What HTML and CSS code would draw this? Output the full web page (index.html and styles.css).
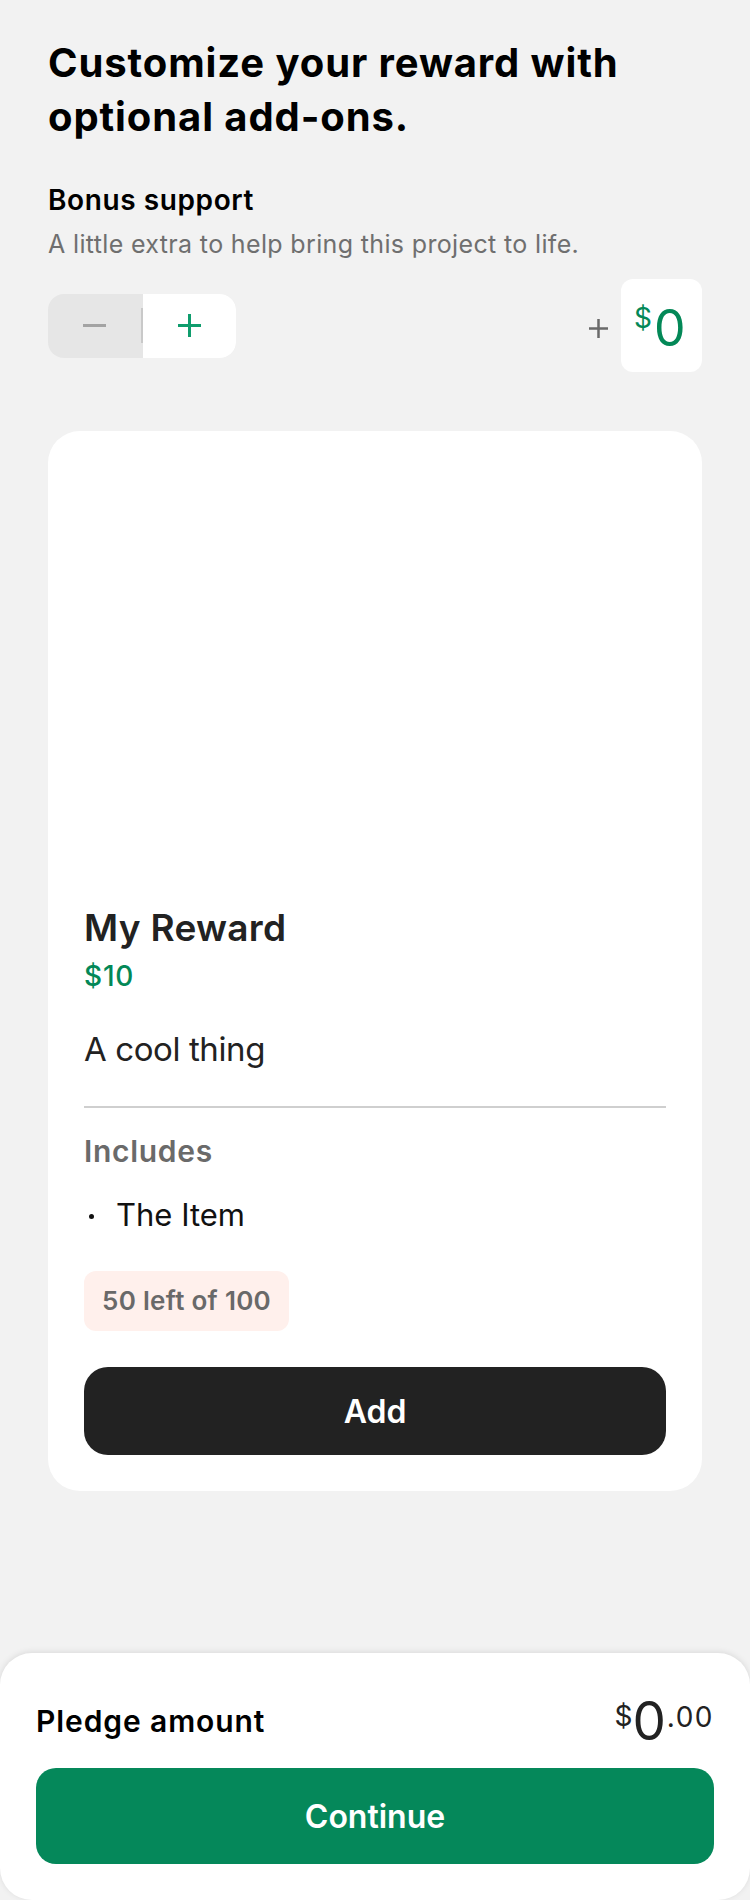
FILE: index.html
```html
<!DOCTYPE html>
<html lang="en">
<head>
<meta charset="utf-8">
<title>Add-ons</title>
<link rel="stylesheet" href="styles.css">
</head>
<body>
<main class="page">
  <h1 class="title">Customize your reward with optional add-ons.</h1>

  <section class="bonus">
    <h2 class="bonus-title">Bonus support</h2>
    <p class="bonus-sub">A little extra to help bring this project to life.</p>
    <div class="bonus-row">
      <div class="stepper">
        <button class="step step-minus" aria-label="Decrease">
          <svg width="23" height="3" viewBox="0 0 23 3"><rect x="0" y="0" width="23" height="3" fill="#a3a3a3"/></svg>
        </button>
        <span class="step-divider"></span>
        <button class="step step-plus" aria-label="Increase">
          <svg width="23" height="23" viewBox="0 0 23 23"><path d="M11.5 0v23M0 11.5h23" stroke="#0f9d6d" stroke-width="3"/></svg>
        </button>
      </div>
      <div class="bonus-amount">
        <svg class="plus-sign" width="19" height="19" viewBox="0 0 19 19"><path d="M9.5 0v19M0 9.5h19" stroke="#6a6a6a" stroke-width="2.5"/></svg>
        <div class="amount-box"><span class="amount-cur">$</span><span class="amount-num">0</span></div>
      </div>
    </div>
  </section>

  <article class="card">
    <div class="card-media"></div>
    <h3 class="reward-title">My Reward</h3>
    <p class="reward-price">$10</p>
    <p class="reward-desc">A cool thing</p>
    <hr class="divider">
    <p class="includes">Includes</p>
    <ul class="items">
      <li class="item"><span class="dot"></span>The Item</li>
    </ul>
    <span class="badge">50 left of 100</span>
    <button class="add-btn">Add</button>
  </article>
</main>

<footer class="pledge">
  <div class="pledge-row">
    <span class="pledge-label">Pledge amount</span>
    <span class="pledge-amount"><span class="pa-cur">$</span><span class="pa-num">0</span><span class="pa-dec">.00</span></span>
  </div>
  <button class="continue-btn">Continue</button>
</footer>
</body>
</html>
```

FILE: styles.css
```css
* { box-sizing: border-box; }

html, body {
  margin: 0;
  padding: 0;
}

body {
  background: #f2f2f2;
  font-family: Inter, "Noto Sans", sans-serif;
  color: #000;
  min-height: 100vh;
  display: flex;
  flex-direction: column;
}

button {
  font-family: inherit;
  border: none;
  padding: 0;
  margin: 0;
  cursor: pointer;
}

.page {
  padding: 36px 48px 0;
}

.title {
  margin: 0;
  font-size: 40px;
  line-height: 54px;
  font-weight: 700;
  letter-spacing: 0.9px;
  color: #000;
}

.bonus-title {
  margin: 40px 0 0;
  font-size: 28px;
  line-height: 32px;
  font-weight: 600;
  letter-spacing: 0.6px;
}

.bonus-sub {
  margin: 12px 0 0;
  font-size: 25px;
  line-height: 32px;
  font-weight: 400;
  letter-spacing: 0.35px;
  color: #6f6f6f;
}

.bonus-row {
  margin-top: 19px;
  display: flex;
  justify-content: space-between;
  align-items: center;
}

.stepper {
  display: flex;
  align-items: center;
  width: 188px;
  height: 64px;
  border-radius: 16px;
  background: #e6e6e6;
  overflow: hidden;
}

.step {
  height: 64px;
  width: 93px;
  display: flex;
  align-items: center;
  justify-content: center;
  background: transparent;
}

.step-plus {
  background: #fff;
}

.step-divider {
  width: 2px;
  height: 35px;
  background: #c9c9c9;
}

.bonus-amount {
  display: flex;
  align-items: center;
  gap: 13px;
}

.plus-sign {
  margin-top: 6px;
}

.amount-box {
  width: 81px;
  height: 93px;
  border-radius: 12px;
  background: #fff;
  display: flex;
  align-items: flex-start;
  padding: 25px 0 0 13px;
  color: #038857;
}

.amount-cur {
  font-size: 28px;
  line-height: 28px;
  margin-top: 0;
}

.amount-num {
  font-size: 50px;
  line-height: 48px;
  margin-left: 2px;
}

.card {
  margin-top: 59px;
  background: #fff;
  border-radius: 32px;
  padding: 0 36px 36px;
  display: flex;
  flex-direction: column;
  align-items: flex-start;
}

.card-media {
  height: 475px;
  width: 100%;
}

.reward-title {
  margin: 0;
  font-size: 37px;
  line-height: 44px;
  font-weight: 600;
  letter-spacing: 0.3px;
  color: #222;
}

.reward-price {
  margin: 10px 0 0;
  font-size: 28px;
  line-height: 32px;
  font-weight: 500;
  letter-spacing: 0.8px;
  color: #038857;
}

.reward-desc {
  margin: 37px 0 0;
  font-size: 33px;
  line-height: 40px;
  letter-spacing: -0.4px;
  color: #222;
}

.divider {
  margin: 37px 0 0;
  width: 100%;
  height: 2px;
  border: none;
  background: #cfcfcf;
}

.includes {
  margin: 25px 0 0;
  font-size: 30px;
  line-height: 36px;
  font-weight: 600;
  letter-spacing: 0.7px;
  color: #6a6a6a;
}

.items {
  list-style: none;
  margin: 26px 0 0;
  padding: 0;
}

.item {
  display: flex;
  align-items: center;
  font-size: 31px;
  line-height: 40px;
  color: #111;
}

.dot {
  width: 5px;
  height: 5px;
  border-radius: 50%;
  background: #111;
  margin: 2px 22px 0 5px;
}

.badge {
  margin-top: 36px;
  height: 60px;
  display: inline-flex;
  align-items: center;
  padding: 0 18px;
  border-radius: 12px;
  background: #fff0ec;
  color: #696969;
  font-size: 26px;
  line-height: 30px;
  font-weight: 600;
  letter-spacing: 0.3px;
}

.add-btn {
  margin-top: 36px;
  width: 100%;
  height: 88px;
  border-radius: 24px;
  background: #222;
  color: #fff;
  font-size: 32px;
  font-weight: 600;
}

.pledge {
  margin-top: auto;
  background: #fff;
  border-radius: 32px;
  box-shadow: 0 -1px 6px rgba(0, 0, 0, 0.1);
  padding: 43px 36px 36px;
}

.pledge-row {
  height: 50px;
  display: flex;
  justify-content: space-between;
  align-items: center;
}

.pledge-label {
  font-size: 30px;
  line-height: 36px;
  font-weight: 600;
  letter-spacing: 0.9px;
  color: #000;
}

.pledge-amount {
  display: inline-flex;
  align-items: flex-start;
  height: 50px;
  color: #222;
}

.pa-cur {
  font-size: 28px;
  line-height: 27px;
  margin-top: 7px;
}

.pa-num {
  font-size: 53px;
  line-height: 50px;
  margin-right: 1px;
}

.pa-dec {
  font-size: 28px;
  line-height: 27px;
  letter-spacing: 1.5px;
  margin-top: 8px;
}

.continue-btn {
  margin-top: 22px;
  width: 100%;
  height: 96px;
  border-radius: 20px;
  background: #05885a;
  color: #fff;
  font-size: 32px;
  font-weight: 600;
}
```
